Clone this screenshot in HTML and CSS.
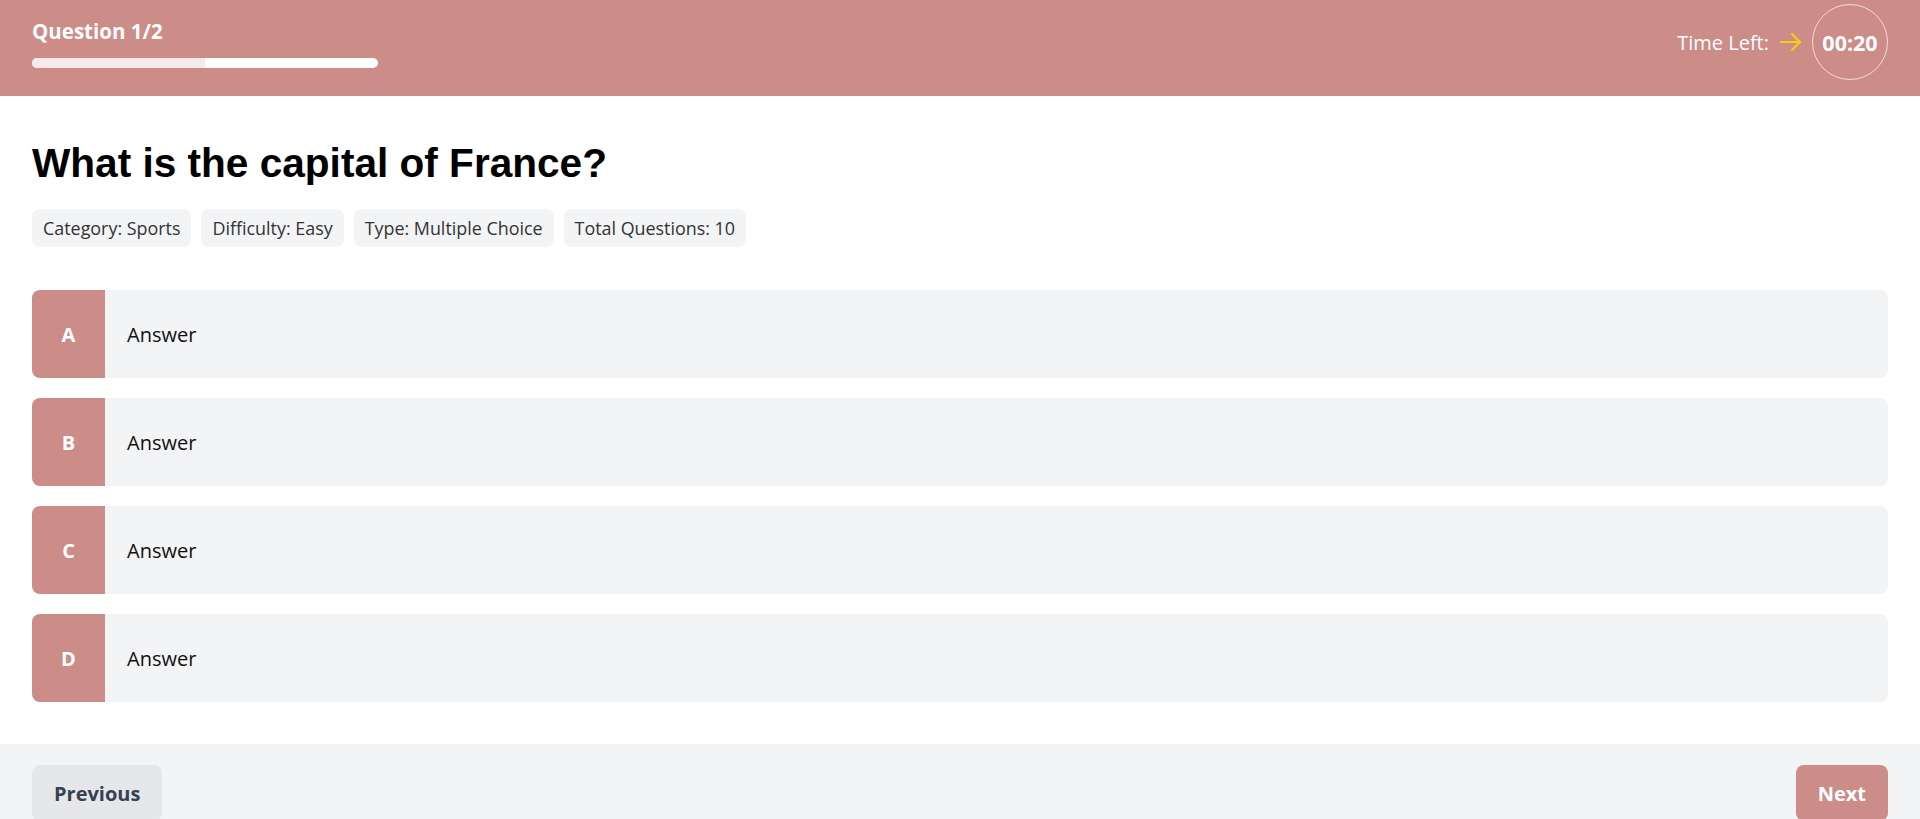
FILE: index.html
```html
<!DOCTYPE html>
<html lang="en">
<head>
<meta charset="utf-8">
<title>Quiz</title>
<link rel="stylesheet" href="styles.css">
</head>
<body>
<header class="topbar">
  <div class="progress-block">
    <div class="q-count">Question 1/2</div>
    <div class="track"><div class="fill" style="width:50%"></div></div>
  </div>
  <div class="timer">
    <span class="time-label">Time Left:</span>
    <svg class="arrow" width="24" height="22" viewBox="0 0 24 22" fill="none" stroke="#FACC15" stroke-width="2.2" stroke-linecap="round" stroke-linejoin="round">
      <path d="M2 11 H21"/>
      <path d="M13 3 L21 11 L13 19"/>
    </svg>
    <div class="clock">00:20</div>
  </div>
</header>

<main class="content">
  <h1 class="question">What is the capital of France?</h1>
  <div class="tags">
    <span class="tag">Category: Sports</span>
    <span class="tag">Difficulty: Easy</span>
    <span class="tag">Type: Multiple Choice</span>
    <span class="tag">Total Questions: 10</span>
  </div>
  <div class="answers">
    <div class="answer"><div class="letter">A</div><div class="answer-text">Answer</div></div>
    <div class="answer"><div class="letter">B</div><div class="answer-text">Answer</div></div>
    <div class="answer"><div class="letter">C</div><div class="answer-text">Answer</div></div>
    <div class="answer"><div class="letter">D</div><div class="answer-text">Answer</div></div>
  </div>
</main>

<footer class="footer">
  <button class="btn btn-prev">Previous</button>
  <button class="btn btn-next">Next</button>
</footer>
</body>
</html>
```

FILE: styles.css
```css
* { box-sizing: border-box; }
html, body { margin: 0; padding: 0; }
body {
  font-family: "Open Sans", "Noto Sans", sans-serif;
  background: #ffffff;
  color: #111;
}

.topbar {
  height: 96px;
  background: #CC8C87;
  padding: 0 32px;
  display: flex;
  justify-content: space-between;
  align-items: flex-start;
  color: #fff;
}
.progress-block {
  padding-top: 18px;
  width: 346px;
}
.q-count {
  font-weight: 700;
  font-size: 20.5px;
  line-height: 26px;
  margin-bottom: 14px;
}
.track {
  height: 10px;
  background: #ffffff;
  border-radius: 5px;
  overflow: hidden;
}
.fill {
  height: 100%;
  background: #F7EAEA;
}

.timer {
  display: flex;
  align-items: center;
  padding-top: 4px;
}
.time-label {
  font-size: 20px;
  margin-right: 10px;
}
.arrow { display: block; margin-right: 9px; }
.clock {
  width: 76px;
  height: 76px;
  border-radius: 50%;
  border: 1px solid rgba(255,255,255,0.7);
  display: flex;
  align-items: center;
  justify-content: center;
  font-weight: 700;
  font-size: 21.5px;
}

.content {
  padding: 43px 32px 42px;
}
.question {
  font-family: "Liberation Sans", Arial, sans-serif;
  font-size: 40.6px;
  line-height: 48px;
  font-weight: 700;
  margin: 0 0 22px;
  color: #000;
}
.tags {
  display: flex;
  gap: 10px;
}
.tag {
  background: #F3F4F6;
  border-radius: 8px;
  padding: 0 11px;
  height: 38px;
  line-height: 38px;
  font-size: 17.9px;
  color: #333;
}
.answers {
  margin-top: 43px;
  display: flex;
  flex-direction: column;
  gap: 20px;
}
.answer {
  display: flex;
  height: 88px;
  background: #F3F4F6;
  border-radius: 8px;
  overflow: hidden;
  align-items: stretch;
}
.letter {
  width: 73px;
  background: #CC8C87;
  color: #fff;
  font-weight: 700;
  font-size: 20px;
  display: flex;
  align-items: center;
  justify-content: center;
}
.answer-text {
  display: flex;
  align-items: center;
  padding-left: 22px;
  font-size: 20px;
  color: #111;
}

.footer {
  background: #F3F4F6;
  padding: 21px 32px;
  display: flex;
  justify-content: space-between;
}
.btn {
  font-family: "Open Sans", "Noto Sans", sans-serif;
  border: none;
  border-radius: 8px;
  height: 56px;
  font-size: 20px;
  font-weight: 700;
  padding: 0 22px;
}
.btn-prev {
  background: #E5E7EB;
  color: #374151;
}
.btn-next {
  background: #CC8C87;
  color: #fff;
}
```
